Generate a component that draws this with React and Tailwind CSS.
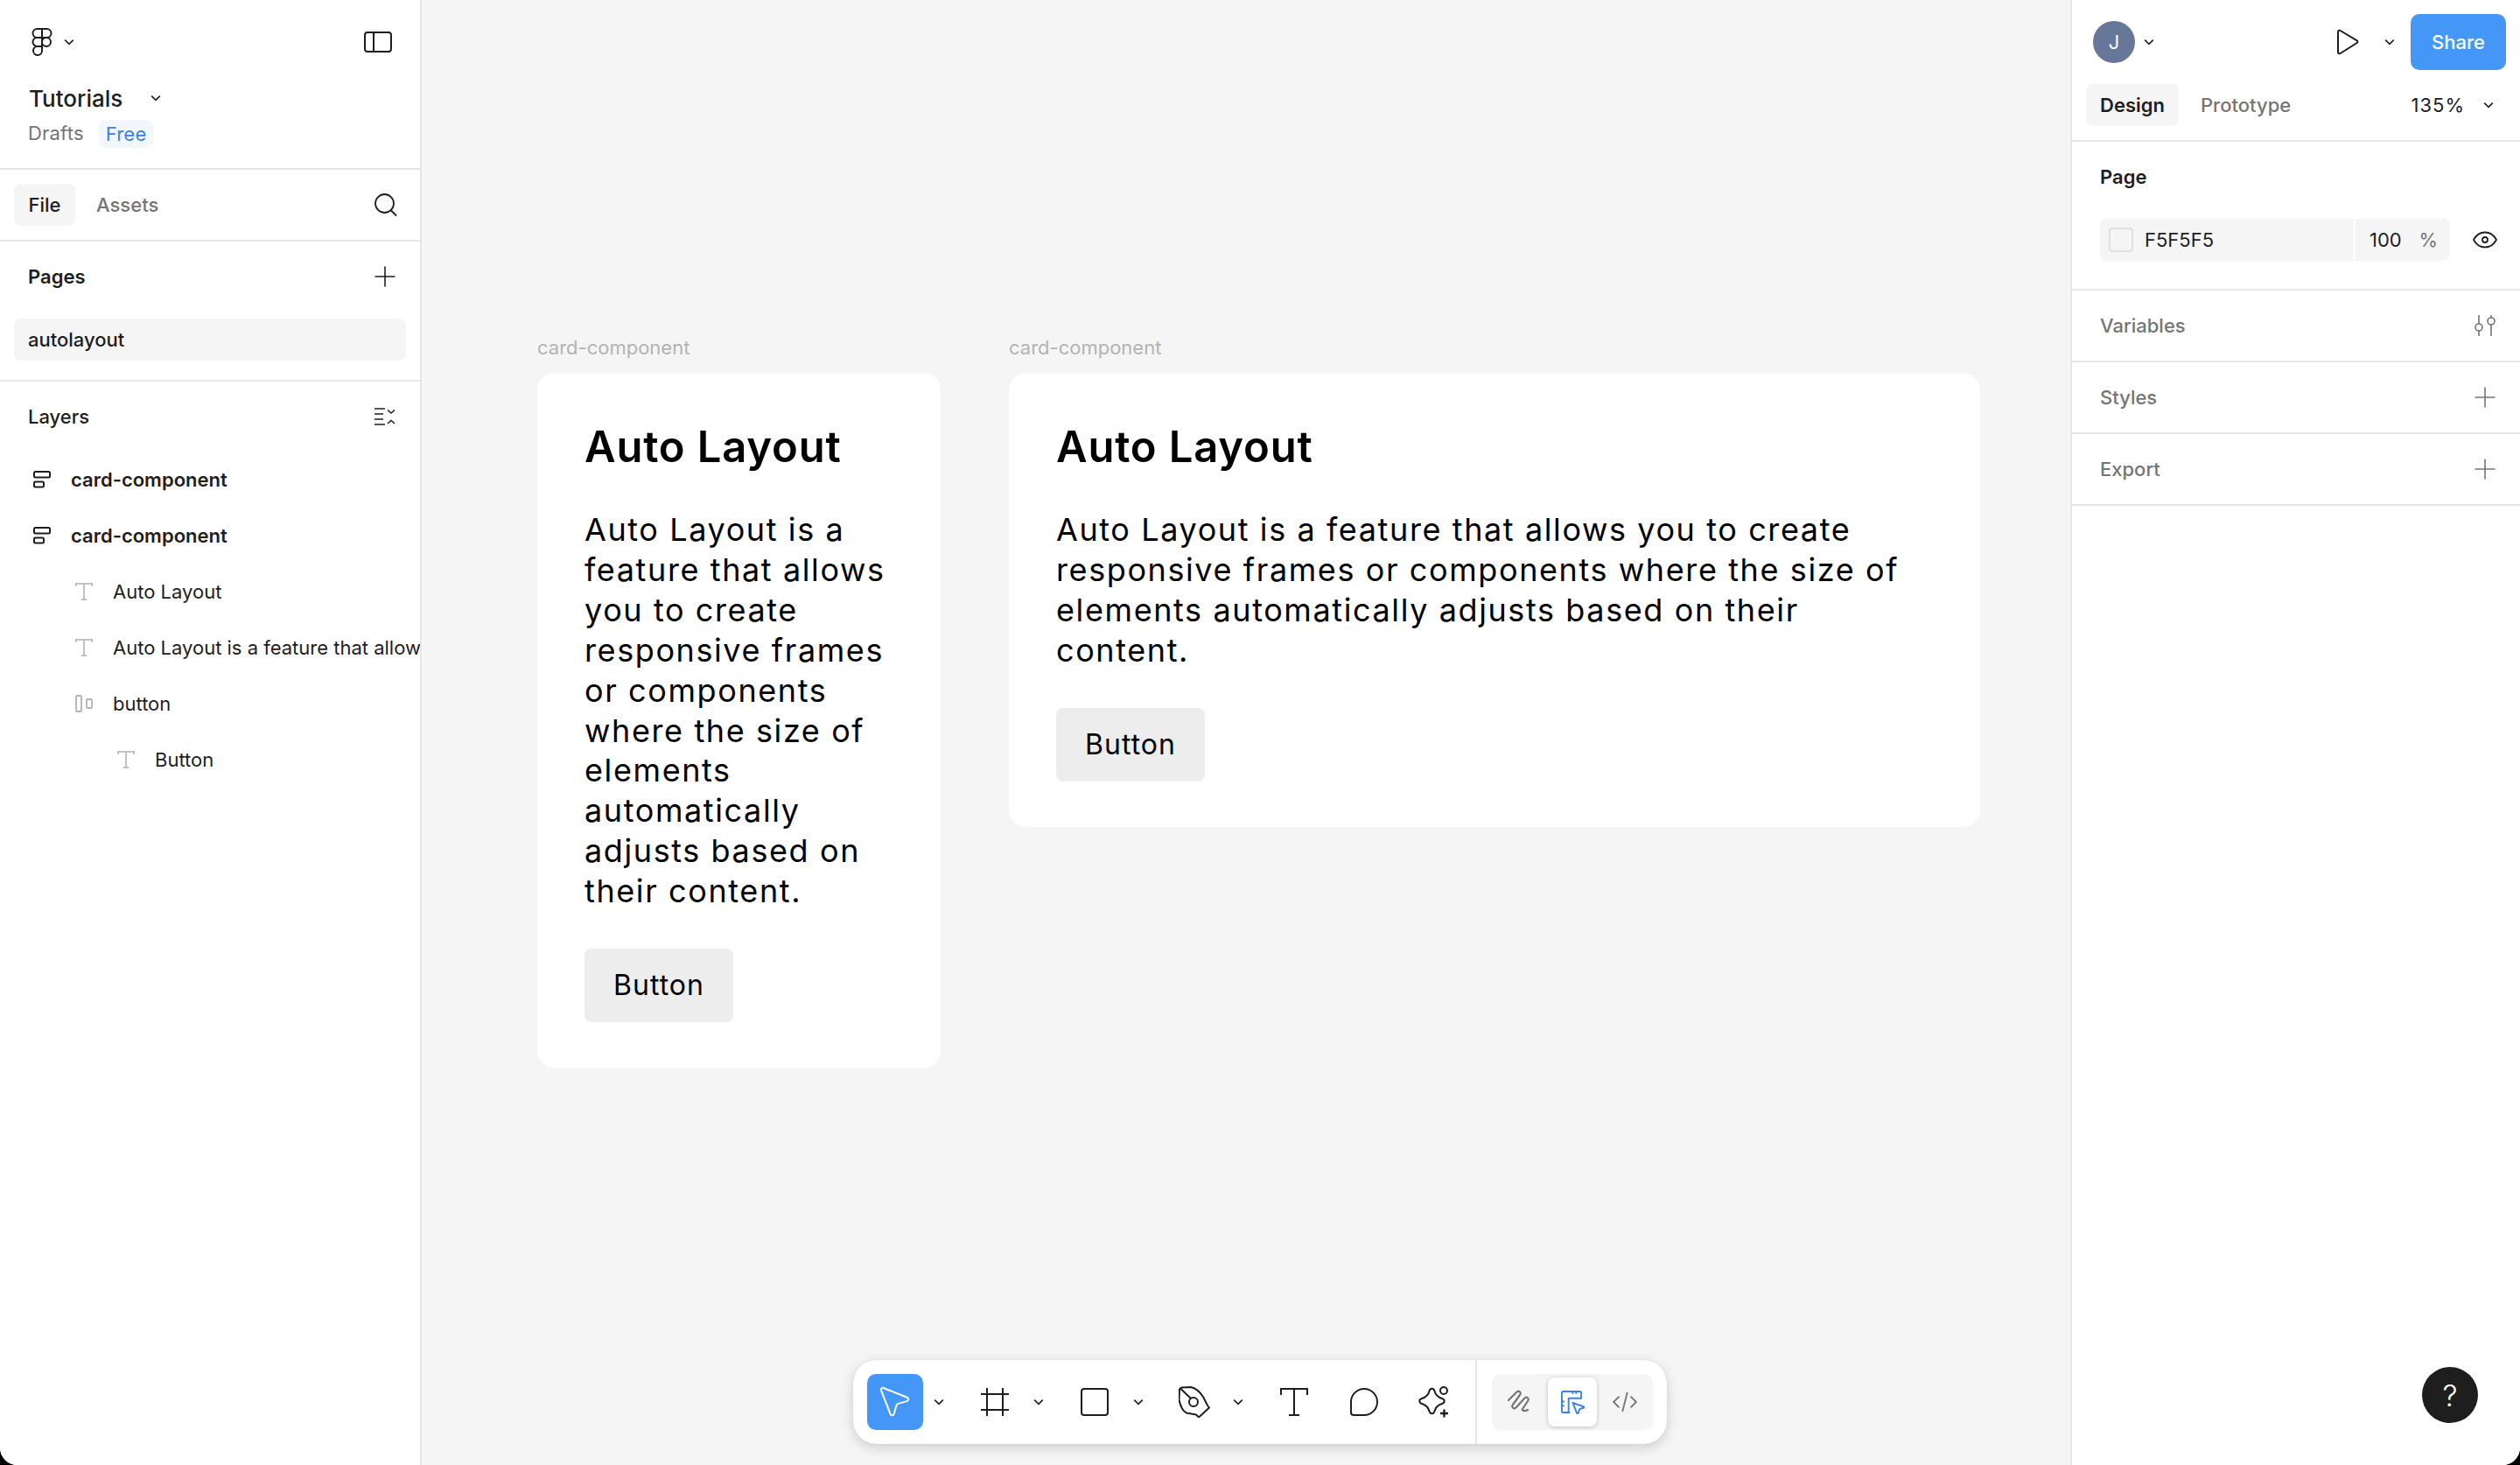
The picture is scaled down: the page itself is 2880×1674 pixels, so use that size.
import React from 'react';

const Chevron = ({ className = 'w-4 h-4 text-[#1e1e1e]' }) => (
  <svg viewBox="0 0 16 16" fill="none" stroke="currentColor" strokeWidth="1.6" className={className}>
    <path d="M3.2 5.6 8 10.4l4.8-4.8" />
  </svg>
);

const Plus = ({ className = 'w-6 h-6 text-[#1e1e1e]' }) => (
  <svg viewBox="0 0 24 24" fill="none" stroke="currentColor" strokeWidth="1.6" className={className}>
    <path d="M12 0.5v23M0.5 12h23" />
  </svg>
);

const FigmaLogo = () => (
  <svg viewBox="0 0 24 32" fill="none" stroke="#1e1e1e" strokeWidth="2" className="w-6 h-8">
    <path d="M12 1H6.500a5 5 0 0 0 0 10H12V1ZM12 1h5.500a5 5 0 0 1 0 10H12M12 11H6.500a5 5 0 0 0 0 10H12V11ZM12 21H6.500a5 5 0 1 0 5.500 5V21Z" />
    <circle cx="17" cy="16" r="5" />
  </svg>
);

const PanelIcon = () => (
  <svg viewBox="0 0 32 24" fill="none" stroke="#1e1e1e" strokeWidth="2" className="w-8 h-6">
    <rect x="1" y="1" width="30" height="22" rx="3" />
    <path d="M11 1v22" />
  </svg>
);

const Search = () => (
  <svg viewBox="0 0 28 28" fill="none" stroke="#1e1e1e" strokeWidth="1.8" className="w-7 h-7">
    <circle cx="12.500" cy="12.500" r="10.500" />
    <path d="m19.500 20 6.500 6.500" />
  </svg>
);

const CollapseIcon = () => (
  <svg viewBox="0 0 24 20" fill="none" stroke="#1e1e1e" strokeWidth="1.6" className="w-6 h-5">
    <path d="M0 1h12M0 7h10M0 13h10M0 19h12M15 2.500l4 3.500 4-3.500M15 18l4-3.500 4 3.500" />
  </svg>
);

const FrameRowsIcon = () => (
  <svg viewBox="0 0 20 20" fill="none" stroke="#1e1e1e" strokeWidth="2" className="w-5 h-5">
    <rect x="1" y="1" width="18" height="6.500" rx="1.500" />
    <rect x="1" y="12.500" width="11" height="6" rx="1.500" />
  </svg>
);

const TextLayerIcon = () => (
  <svg viewBox="0 0 20 20" fill="none" stroke="#b3b3b3" strokeWidth="1.6" className="w-5 h-5">
    <path d="M0.800 4V1h18.400v3M10 1v18M6.500 19h7" />
  </svg>
);

const ButtonLayerIcon = () => (
  <svg viewBox="0 0 20 20" fill="none" stroke="#b3b3b3" strokeWidth="1.800" className="w-5 h-5">
    <rect x="1" y="1" width="6" height="18" rx="1" />
    <rect x="13" y="5" width="6" height="10" rx="1" />
  </svg>
);

const Eye = () => (
  <svg viewBox="0 0 28 20" fill="none" stroke="#1e1e1e" strokeWidth="1.800" className="w-7 h-5">
    <path d="M1 10C4 4.500 8.500 1.500 14 1.500S24 4.500 27 10c-3 5.500-7.500 8.500-13 8.500S4 15.500 1 10Z" />
    <circle cx="14" cy="10" r="3" />
  </svg>
);

const Sliders = () => (
  <svg viewBox="0 0 24 24" fill="none" stroke="#757575" strokeWidth="1.600" className="w-6 h-6">
    <path d="M5 0v10M5 18v6M19 0v3M19 11v13" />
    <circle cx="5" cy="14" r="4" />
    <circle cx="19" cy="7" r="4" />
  </svg>
);

const LayerRow = ({ icon, pad, bold, children }) => (
  <div className={`h-16 flex items-center ${pad} text-[22px] whitespace-nowrap ${bold ? 'font-semibold' : ''}`}>
    <span className="w-5 h-5 shrink-0 mr-[23px]">{icon}</span>
    {children}
  </div>
);

const SidePanelLeft = () => (
  <aside className="w-[482px] shrink-0 h-full bg-white border-r-2 border-[#e6e6e6] overflow-hidden flex flex-col text-[#1e1e1e]">
    <div className="h-[194px] shrink-0 border-b-2 border-[#e6e6e6] px-8">
      <div className="flex items-center justify-between pt-8">
        <div className="flex items-center gap-[11px] pl-[4px]">
          <FigmaLogo />
          <Chevron />
        </div>
        <PanelIcon />
      </div>
      <div className="flex items-center mt-[28px] h-10">
        <span className="ml-[1px] text-[26px] font-medium">Tutorials</span>
        <span className="ml-[30px]"><Chevron /></span>
      </div>
      <div className="flex items-center mt-[4px] text-[22px] tracking-[0.2px]">
        <span className="text-[#757575]">Drafts</span>
        <span className="ml-[17px] px-2 h-8 leading-8 rounded-lg bg-[#f2f7ff] text-[#3b82e6]">Free</span>
      </div>
    </div>
    <div className="h-[82px] shrink-0 border-b-2 border-[#e6e6e6] pl-4 pr-[25px] flex items-center text-[22px]">
      <span className="h-12 w-[70px] rounded-lg bg-[#f5f5f5] flex items-center justify-center font-medium">File</span>
      <span className="ml-6 text-[#757575] font-medium">Assets</span>
      <span className="ml-auto flex"><Search /></span>
    </div>
    <div className="h-[160px] shrink-0 border-b-2 border-[#e6e6e6]">
      <div className="h-[80px] flex items-center justify-between px-8 pr-7 text-[22px] font-semibold">
        <span>Pages</span>
        <Plus />
      </div>
      <div className="mx-4 w-[448px] h-12 mt-2 rounded-lg bg-[#f5f5f5] flex items-center px-4 text-[22px] font-medium">autolayout</div>
    </div>
    <div className="h-[80px] shrink-0 flex items-center justify-between px-8 pr-7 text-[22px]">
      <span className="font-medium">Layers</span>
      <CollapseIcon />
    </div>
    <div>
      <LayerRow icon={<FrameRowsIcon />} pad="pl-[38px]" bold>card-component</LayerRow>
      <LayerRow icon={<FrameRowsIcon />} pad="pl-[38px]" bold>card-component</LayerRow>
      <LayerRow icon={<TextLayerIcon />} pad="pl-[86px]">Auto Layout</LayerRow>
      <LayerRow icon={<TextLayerIcon />} pad="pl-[86px]">Auto Layout is a feature that allows</LayerRow>
      <LayerRow icon={<ButtonLayerIcon />} pad="pl-[86px]">button</LayerRow>
      <LayerRow icon={<TextLayerIcon />} pad="pl-[134px]">Button</LayerRow>
    </div>
  </aside>
);

const Section = ({ label, icon }) => (
  <div className="h-[82px] shrink-0 border-b-2 border-[#e6e6e6] flex items-center justify-between pl-8 pr-[28px] text-[22px] font-medium text-[#757575]">
    <span>{label}</span>
    {icon}
  </div>
);

const SidePanelRight = () => (
  <aside className="w-[514px] shrink-0 h-full bg-white border-l-2 border-[#e6e6e6] flex flex-col text-[#1e1e1e] text-[22px]">
    <div className="flex items-center pt-4 pr-4 pl-6">
      <span className="w-12 h-12 rounded-full bg-[#667799] text-white flex items-center justify-center text-[22px]">J</span>
      <span className="ml-2"><Chevron /></span>
      <span className="ml-auto flex">
        <svg viewBox="0 0 26 30" fill="none" stroke="#1e1e1e" strokeWidth="2" strokeLinejoin="round" className="w-[26px] h-[30px]">
          <path d="M2 3.500c0-1.500 1.400-2.300 2.700-1.500l19 11.300c1 .7 1 2.100 0 2.700L4.700 28c-1.300.8-2.700-.1-2.700-1.500Z" />
        </svg>
      </span>
      <span className="ml-[27px] mr-4"><Chevron /></span>
      <span className="w-[109px] h-16 rounded-[10px] bg-[#4597f7] text-white flex items-center justify-center font-medium">Share</span>
    </div>
    <div className="flex items-center h-[82px] border-b-2 border-[#e6e6e6] pl-4 pr-7">
      <span className="h-12 w-[106px] rounded-lg bg-[#f5f5f5] flex items-center justify-center font-semibold">Design</span>
      <span className="ml-[25px] text-[#757575] font-medium">Prototype</span>
      <span className="ml-auto font-normal tracking-[1px]">135%</span>
      <span className="ml-[19px]"><Chevron /></span>
    </div>
    <div className="h-[170px] shrink-0 border-b-2 border-[#e6e6e6] pl-8 pr-[26px]">
      <div className="h-[80px] flex items-center font-semibold">Page</div>
      <div className="flex items-center justify-between mt-2">
        <div className="w-[400px] h-12 rounded-lg bg-[#f5f5f5] flex items-stretch overflow-hidden">
          <div className="flex-1 flex items-center pl-[10px]">
            <span className="w-7 h-7 rounded-[4px] bg-[#f5f5f5] border-2 border-[#e0e0e0]"></span>
            <span className="ml-[13px]">F5F5F5</span>
          </div>
          <div className="w-[2px] my-[2px] bg-white"></div>
          <div className="w-[108px] flex items-center pl-4">
            <span>100</span>
            <span className="ml-auto mr-[14px] text-[#757575]">%</span>
          </div>
        </div>
        <Eye />
      </div>
    </div>
    <Section label="Variables" icon={<Sliders />} />
    <Section label="Styles" icon={<Plus className="w-6 h-6 text-[#757575]" />} />
    <Section label="Export" icon={<Plus className="w-6 h-6 text-[#757575]" />} />
  </aside>
);

const Button = () => (
  <div className="w-[170px] h-[84px] rounded-[8px] bg-[#ededed] flex items-center justify-center text-[32px] tracking-[1px]">Button</div>
);

const Card = ({ width, text }) => (
  <div className={`${width} shrink-0`}>
    <div className="text-[22px] leading-[30px] text-[#b3b3b3]">card-component</div>
    <div className="mt-[14px] rounded-[20px] bg-white px-[54px] pt-[55px] pb-[52px] text-black">
      <div className="text-[49px] font-semibold leading-[60px] tracking-[0.8px]">Auto Layout</div>
      <div className="mt-[42px] text-[36px] leading-[45.9px] tracking-[1.6px]">{text}</div>
      <div className="mt-[42px]"><Button /></div>
    </div>
  </div>
);

const Tool = ({ children, chevron }) => (
  <div className="flex items-center shrink-0">
    <span className="w-16 h-16 flex items-center justify-center">{children}</span>
    {chevron && <span className="w-[50px] flex pl-[10px]"><Chevron /></span>}
  </div>
);

const Toolbar = () => (
  <div className="absolute bottom-[24px] left-[493px] h-24 w-[930px] rounded-[26px] bg-white shadow-[0_4px_14px_rgba(0,0,0,0.16),0_0_1px_rgba(0,0,0,0.2)] flex items-center pl-4 text-[#1e1e1e]">
    <span className="w-16 h-16 rounded-[10px] bg-[#4597f7] flex items-center justify-center shrink-0">
      <svg viewBox="0 0 36 36" fill="none" stroke="white" strokeWidth="2" strokeLinejoin="round" className="w-9 h-9">
        <path d="M2 4.500c-.5-1.800 1-3.200 2.700-2.500l27 10.800c2 .8 1.900 3.700-.2 4.300l-9.800 2.800c-1.200.3-2 1.200-2.300 2.300l-2.700 9.500c-.6 2-3.400 2.100-4.100.1Z" />
      </svg>
    </span>
    <span className="w-[50px] pl-[10px] shrink-0 flex"><Chevron /></span>
    <Tool chevron>
      <svg viewBox="0 0 32 32" fill="none" stroke="#1e1e1e" strokeWidth="2" className="w-8 h-8">
        <path d="M7 0v32M25 0v32M0 7h32M0 25h32" />
      </svg>
    </Tool>
    <Tool chevron>
      <svg viewBox="0 0 32 32" fill="none" stroke="#1e1e1e" strokeWidth="2" className="w-8 h-8">
        <rect x="1" y="1" width="30" height="30" rx="3" />
      </svg>
    </Tool>
    <Tool chevron>
      <svg viewBox="0 0 36 36" fill="none" stroke="#1e1e1e" strokeWidth="2" strokeLinejoin="round" className="w-9 h-9">
        <path d="M1 3.500 3 1.500 14 1c5 1 10 5 14 11l5 10 2 2.500-12 11-3-3-11-2c-4-2-7-8-8.500-15Z" />
        <path d="M2.500 3 14 14" />
        <circle cx="17" cy="18" r="5" />
      </svg>
    </Tool>
    <Tool>
      <svg viewBox="0 0 32 32" fill="none" stroke="#1e1e1e" strokeWidth="2" className="w-8 h-8">
        <path d="M1 8V1h30v7M16 1v30M10 31h12" />
      </svg>
    </Tool>
    <span className="w-4 shrink-0"></span>
    <Tool>
      <svg viewBox="0 0 32 32" fill="none" stroke="#1e1e1e" strokeWidth="2" className="w-8 h-8">
        <path d="M16 1a15 15 0 0 1 0 30H4a3 3 0 0 1-3-3V16A15 15 0 0 1 16 1Z" />
      </svg>
    </Tool>
    <span className="w-[15px] shrink-0"></span>
    <Tool>
      <svg viewBox="0 0 36 36" fill="none" stroke="#1e1e1e" strokeWidth="2" strokeLinejoin="round" className="w-9 h-9">
        <path d="M13.700 5c.8-3 4.800-3 5.600 0 1.100 4.400 3.300 7.400 8.700 9 3.600 1.100 3.600 5 0 6-5 1.500-7.500 4.500-8.700 9-.8 3-4.800 3-5.600 0-1.200-4.500-3.700-7.500-8.700-9-3.600-1-3.600-4.900 0-6 5.400-1.600 7.600-4.600 8.700-9Z" />
        <circle cx="30" cy="5" r="4" />
        <path d="M26 31h9M30.500 26.500v9" strokeWidth="2.400" />
      </svg>
    </Tool>
    <div className="ml-4 w-[2px] self-stretch bg-[#e6e6e6]"></div>
    <div className="ml-[17px] w-[184px] h-16 rounded-[10px] bg-[#f5f5f5] flex items-center gap-1 pl-1">
      <span className="w-14 h-14 flex items-center justify-center">
        <svg viewBox="0 0 28 28" fill="none" stroke="#757575" strokeWidth="2.200" strokeLinecap="round" className="w-7 h-7">
          <path d="M1 12 10 3c3-3 6 0 4 3L6 17c-2 3 1 6 4 3l9-10c3-3 6 0 4 3l-6 9c-1 2 2 3 6 1" />
        </svg>
      </span>
      <span className="w-14 h-14 rounded-[8px] bg-white shadow-[0_1px_5px_rgba(0,0,0,0.22)] flex items-center justify-center">
        <svg viewBox="0 0 28 28" fill="none" stroke="#3b82e6" strokeWidth="2" strokeLinejoin="round" className="w-[27px] h-[27px]">
          <path d="M10 26H2.500A1.500 1.500 0 0 1 1 24.500V2.500A1.500 1.500 0 0 1 2.500 1h20A1.500 1.500 0 0 1 24 2.500V9H9v17Z" />
          <path d="M14 1v3M18 1v3M1 13h3M1 18h3" />
          <path d="M14 14.500 27 19c.5.3.5 1-.1 1.200L22 22l-1.800 5c-.3.6-1 .6-1.200 0Z" />
        </svg>
      </span>
      <span className="w-14 h-14 flex items-center justify-center">
        <svg viewBox="0 0 30 26" fill="none" stroke="#757575" strokeWidth="2" className="w-7 h-6">
          <path d="M8 6 1 13l7 7M22 6l7 7-7 7M18 1l-6 24" />
        </svg>
      </span>
    </div>
  </div>
);

export default function App() {
  return (
    <div className="relative w-[2880px] h-[1674px] overflow-hidden bg-black font-['Inter',sans-serif]">
      <div className="flex w-full h-full rounded-b-[20px] overflow-hidden bg-[#f5f5f5]">
        <SidePanelLeft />
        <main className="relative flex-1 h-full bg-[#f5f5f5]">
          <div className="flex items-start gap-[78px] pl-[132px] pt-[382px]">
            <Card width="w-[461px]" text="Auto Layout is a feature that allows you to create responsive frames or components where the size of elements automatically adjusts based on their content." />
            <Card width="w-[1110px]" text="Auto Layout is a feature that allows you to create responsive frames or components where the size of elements automatically adjusts based on their content." />
          </div>
          <Toolbar />
        </main>
        <SidePanelRight />
      </div>
      <button className="absolute right-[48px] bottom-[48px] w-16 h-16 rounded-full bg-[#1e1e1e] text-white text-[34px] font-light flex items-center justify-center">?</button>
    </div>
  );
}
